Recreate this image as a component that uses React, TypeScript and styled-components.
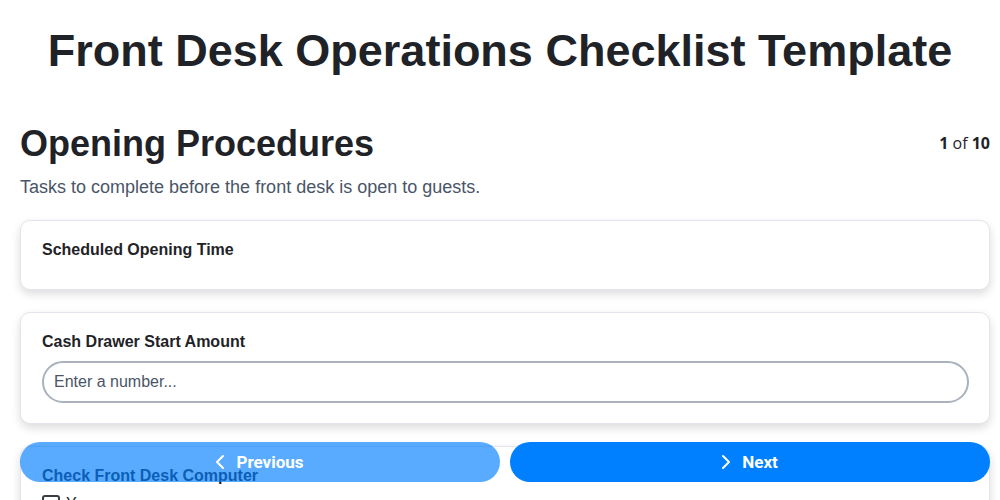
import React, { useState } from 'react';
import styled, { createGlobalStyle } from 'styled-components';
import { ChevronLeft, ChevronRight } from 'lucide-react';

const GlobalStyle = createGlobalStyle`
  body {
    margin: 0;
    background: #ffffff;
    font-family: "Liberation Sans", Arial, sans-serif;
    color: #1f2328;
  }
`;

const Title = styled.h1`
  margin: 0;
  padding: 26px 0 0;
  text-align: center;
  font-size: 45px;
  font-weight: 700;
  line-height: 50px;
  color: #1f2328;
`;

const Page = styled.div`
  padding: 0 10px 80px 20px;
`;

const SectionHeader = styled.div`
  display: flex;
  justify-content: space-between;
  align-items: flex-start;
  margin-top: 46px;
`;

const SectionTitle = styled.h2`
  margin: 0;
  font-size: 36px;
  font-weight: 700;
  line-height: 44px;
  color: #1f2328;
`;

const Counter = styled.div`
  font-family: "Open Sans", sans-serif;
  font-size: 16px;
  line-height: 22px;
  padding-top: 10px;
  color: #1f2328;

  b {
    font-weight: 700;
  }
`;

const Description = styled.p`
  margin: 9px 0 21px;
  font-size: 18px;
  line-height: 24px;
  color: #4a5568;
`;

const Fields = styled.div`
  display: flex;
  flex-direction: column;
  gap: 22px;
`;

const Card = styled.div<{ $minHeight?: number }>`
  background: #fff;
  border: 1px solid #e4e4ec;
  border-radius: 10px;
  box-shadow: 0 4px 10px rgba(0, 0, 0, 0.14);
  padding: 20px 20px 20px 21px;
  min-height: ${(p) => p.$minHeight ?? 0}px;
  box-sizing: border-box;
`;

const Label = styled.div`
  font-size: 16px;
  font-weight: 700;
  line-height: 18px;
  color: #1f2328;
  margin-bottom: 10px;
`;

const NumberInput = styled.input`
  width: 100%;
  box-sizing: border-box;
  height: 42px;
  border: 2px solid #aab2bd;
  border-radius: 21px;
  padding: 0 10px;
  font-family: "Liberation Sans", sans-serif;
  font-size: 16px;
  color: #1f2328;
  outline: none;

  &::placeholder {
    color: #4a5568;
  }
`;

const CheckRow = styled.label`
  display: flex;
  align-items: center;
  gap: 6px;
  font-size: 16px;
  color: #1f2328;
`;

const Box = styled.span`
  width: 18px;
  height: 18px;
  border: 2px solid #3a3f47;
  border-radius: 3px;
  box-sizing: border-box;
`;

const Footer = styled.div`
  position: fixed;
  left: 20px;
  right: 10px;
  bottom: 18px;
  display: grid;
  grid-template-columns: 1fr 1fr;
  gap: 10px;
`;

const NavButton = styled.button`
  height: 40px;
  border: none;
  border-radius: 20px;
  background: #007fff;
  color: #fff;
  font-family: Roboto, sans-serif;
  font-size: 17px;
  font-weight: 700;
  display: flex;
  align-items: center;
  justify-content: center;
  gap: 4px;
  padding: 0 16px 0 8px;
  cursor: pointer;

  &:disabled {
    opacity: 0.65;
    cursor: default;
  }
`;

const steps = 10;

const App: React.FC = () => {
  const [step, setStep] = useState(0);

  return (
    <>
      <GlobalStyle />
      <Title>Front Desk Operations Checklist Template</Title>
      <Page>
        <SectionHeader>
          <SectionTitle>Opening Procedures</SectionTitle>
          <Counter>
            <b>{step + 1}</b> of <b>{steps}</b>
          </Counter>
        </SectionHeader>
        <Description>Tasks to complete before the front desk is open to guests.</Description>
        <Fields>
          <Card $minHeight={70}>
            <Label>Scheduled Opening Time</Label>
          </Card>
          <Card>
            <Label>Cash Drawer Start Amount</Label>
            <NumberInput type="text" placeholder="Enter a number..." />
          </Card>
          <Card>
            <Label>Check Front Desk Computer</Label>
            <CheckRow>
              <Box />
              Yes
            </CheckRow>
          </Card>
        </Fields>
      </Page>
      <Footer>
        <NavButton disabled={step === 0} onClick={() => setStep(step - 1)}>
          <ChevronLeft size={24} strokeWidth={2} />
          Previous
        </NavButton>
        <NavButton disabled={step === steps - 1} onClick={() => setStep(step + 1)}>
          <ChevronRight size={24} strokeWidth={2} />
          Next
        </NavButton>
      </Footer>
    </>
  );
};

export default App;
